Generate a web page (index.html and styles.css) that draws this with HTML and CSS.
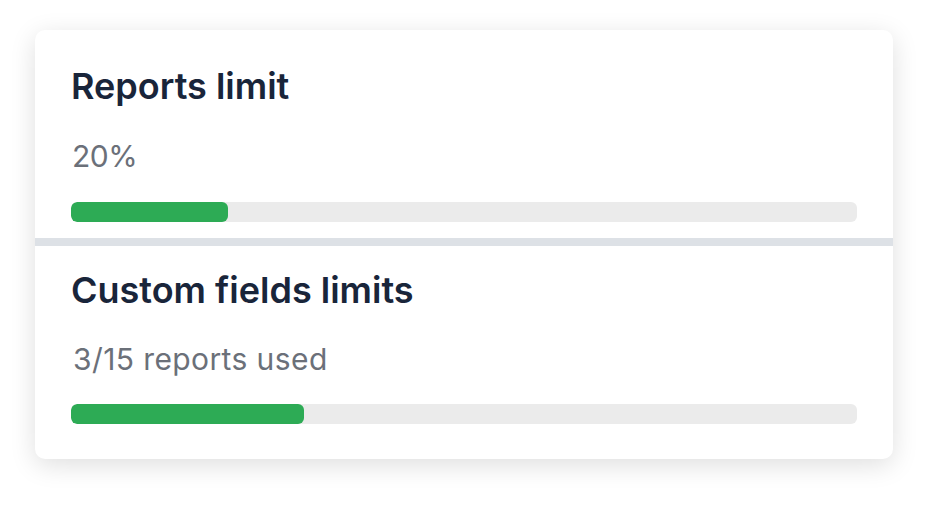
FILE: index.html
```html
<!DOCTYPE html>
<html lang="en">
<head>
  <meta charset="UTF-8">
  <title>Usage limits</title>
  <link rel="stylesheet" href="styles.css">
</head>
<body>

  <div class="card">
    <div class="limit first">
      <h2>Reports limit</h2>
      <p class="usage">20%</p>
      <div class="bar"><div class="fill" style="width: 20%"></div></div>
    </div>
    <div class="limit second">
      <h2>Custom fields limits</h2>
      <p class="usage">3/15 reports used</p>
      <div class="bar"><div class="fill" style="width: 29.6%"></div></div>
    </div>
  </div>

</body>
</html>
```

FILE: styles.css
```css
body {
  font-family: Inter, 'Noto Sans', sans-serif;
  background: #fff;
  margin: 0;
  padding: 30px 35px;
}
.card {
  width: 858px;
  background: #fff;
  border-radius: 10px;
  box-shadow: 0 6px 26px rgba(0,0,0,0.13);
  overflow: hidden;
}
.limit {
  padding: 34px 36px 16px;
}
.limit.second {
  border-top: 8px solid #dde1e6;
  padding-top: 22px;
  padding-bottom: 35px;
}
h2 {
  margin: 0;
  font-size: 36px;
  line-height: 44px;
  font-weight: 600;
  color: #19253a;
}
.usage {
  margin: 30px 0 28px;
  padding-left: 1px;
  font-size: 30px;
  line-height: 36px;
  color: #6b7079;
  letter-spacing: -0.5px;
}
.second .usage {
  margin-top: 29px;
  margin-bottom: 27px;
  padding-left: 2px;
  letter-spacing: 0.4px;
}
.bar {
  height: 20px;
  background: #ebebeb;
  border-radius: 6px;
  overflow: hidden;
}
.fill {
  height: 100%;
  background: #2dab55;
  border-radius: 6px;
}
```
